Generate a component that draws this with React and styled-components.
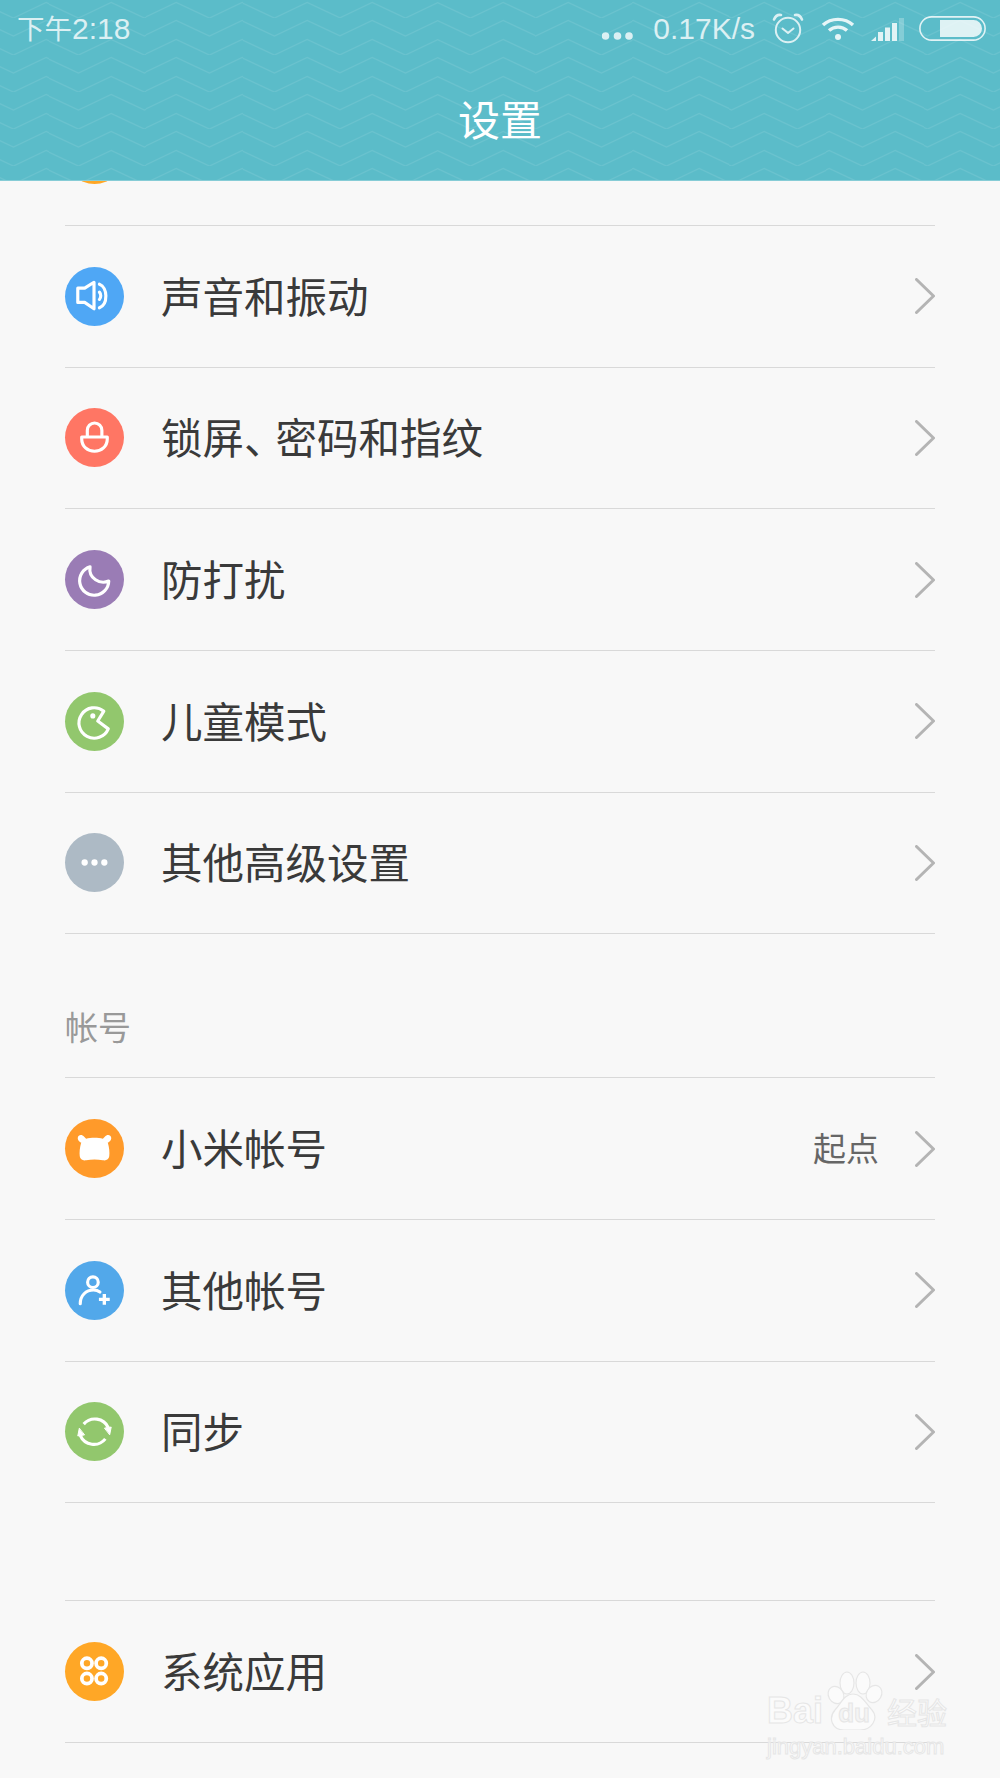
import React from 'react';
import styled, { createGlobalStyle } from 'styled-components';

const zigzag = `url("data:image/svg+xml,%3Csvg xmlns='http://www.w3.org/2000/svg' width='65.33' height='18.5' viewBox='0 0 65.33 18.5'%3E%3Cpath d='M-19.7 2.3L13.3 17.7L45.7 2.3L78.7 17.7' fill='none' stroke='%23ffffff' stroke-opacity='0.09' stroke-width='1.2'/%3E%3C/svg%3E")`;

const GlobalStyle = createGlobalStyle`
  html, body {
    margin: 0;
    padding: 0;
    background: #f8f8f8;
  }
  body {
    font-family: "Noto Sans CJK SC", "Liberation Sans", sans-serif;
  }
`;

const Page = styled.div`
  position: relative;
  width: 1000px;
  height: 1778px;
  overflow: hidden;
  background: #f8f8f8;
`;

const Header = styled.header`
  height: 180px;
  background-color: #5bbcc9;
  background-image: ${zigzag};
  background-size: 65.33px 18.5px;
  border-bottom: 1px solid #86ccd6;
  display: flex;
  flex-direction: column;
`;

const StatusBar = styled.div`
  height: 58px;
  padding: 0 14px 0 17px;
  display: flex;
  align-items: center;
  justify-content: space-between;
  color: rgba(255, 255, 255, 0.78);
  font-family: "Liberation Sans", "Noto Sans CJK SC", sans-serif;
  font-size: 30px;
`;

const Clock = styled.span`
  display: flex;
  align-items: baseline;
`;

const ClockCjk = styled.span`
  font-size: 27.5px;
  font-family: "Noto Sans CJK SC", sans-serif;
  line-height: 1;
`;

const StatusRight = styled.div`
  display: flex;
  align-items: center;
  gap: 16px;
`;

const StatusIcon = styled.svg`
  display: block;
  flex: none;
  margin-left: ${(p) => p.$shift || 0}px;
  margin-bottom: ${(p) => p.$lift || 0}px;
`;

const Title = styled.h1`
  flex: 1;
  margin: 0;
  padding-bottom: 4px;
  display: flex;
  align-items: center;
  justify-content: center;
  color: #fff;
  font-size: 42px;
  font-weight: 400;
`;

const List = styled.main`
  padding: 0 65px;
`;

const PeekRow = styled.div`
  height: 44px;
  overflow: hidden;
  border-bottom: 1px solid #d9d9d9;
  display: flex;
  align-items: flex-end;
`;

const PeekIcon = styled.div`
  width: 59px;
  height: 59px;
  margin-bottom: 41px;
  flex: none;
  border-radius: 50%;
  background: #ffa726;
`;

const Row = styled.div`
  height: 141.67px;
  box-sizing: border-box;
  border-bottom: 1px solid #d9d9d9;
  display: flex;
  align-items: center;
`;

const IconDisc = styled.div`
  width: 59px;
  height: 59px;
  flex: none;
  border-radius: 50%;
  background: ${(p) => p.$color};
  svg {
    display: block;
    width: 100%;
    height: 100%;
  }
`;

const Label = styled.span`
  flex: 1;
  margin-left: 37px;
  padding-bottom: 2px;
  color: #3a3a3a;
  font-size: 41.5px;
  line-height: 1;
`;

const Pause = styled.span`
  letter-spacing: -10px;
`;

const Value = styled.span`
  margin-right: 36px;
  padding-bottom: 3px;
  color: #666;
  font-size: 33px;
`;

const SectionTitle = styled.div`
  height: 144px;
  box-sizing: border-box;
  border-bottom: 1px solid #d9d9d9;
  display: flex;
  align-items: flex-end;
  padding-bottom: 34px;
  color: #999;
  font-size: 33px;
  line-height: 1;
`;

const Spacer = styled.div`
  height: 98px;
  box-sizing: border-box;
  border-bottom: 1px solid #d9d9d9;
`;

const Watermark = styled.div`
  position: absolute;
  left: 767px;
  top: 1668px;
  width: 182px;
  display: flex;
  flex-direction: column;
  color: #fbfbfb;
  -webkit-text-stroke: 1px #e6e6e6;
  font-family: "Liberation Sans", "Noto Sans CJK SC", sans-serif;
  pointer-events: none;
`;

const Paw = styled.svg`
  position: absolute;
  left: 43px;
  top: 0;
`;

const Brand = styled.div`
  position: relative;
  height: 64px;
  display: flex;
  align-items: flex-end;
  font-weight: 700;
  font-size: 36px;
  line-height: 42px;
  white-space: nowrap;
`;

const BrandDu = styled.span`
  position: relative;
  flex: none;
  width: 62px;
  margin-right: 2px;
  text-align: center;
  font-size: 26px;
  line-height: 38px;
  color: #f4f4f4;
`;

const BrandCn = styled.span`
  flex: none;
  font-size: 30px;
  line-height: 42px;
  font-weight: 400;
  font-family: "Noto Sans CJK SC", sans-serif;
`;

const BrandUrl = styled.div`
  font-size: 22px;
  line-height: 26px;
  white-space: nowrap;
  margin-top: 2px;
`;

const Glyph = ({ children, fill = 'none', width = 3.2 }) => (
  <svg
    viewBox="0 0 60 60"
    fill={fill}
    stroke="#fff"
    strokeWidth={width}
    strokeLinecap="round"
    strokeLinejoin="round"
  >
    {children}
  </svg>
);

const SoundIcon = () => (
  <Glyph>
    <path d="M13 21.5V36H20L29.5 42.5V15.5L20 21.5Z" />
    <path d="M35 25.5C36.8 27.5 36.8 31 35 33" />
    <path d="M35 17.5C43.5 20.5 44 38 35 41.5" />
  </Glyph>
);

const LockIcon = () => (
  <Glyph>
    <path d="M17 29.5H43V31.5C43 39 37 44 30 44C23 44 17 39 17 31.5Z" />
    <path d="M22.7 29V22.7A7.4 7.4 0 0 1 37.5 22.7V29" />
  </Glyph>
);

const MoonIcon = () => (
  <Glyph>
    <path d="M25.5 17A14.8 14.8 0 1 0 44.5 31.5C36 35.5 23.5 29 25.5 17Z" />
  </Glyph>
);

const PacmanIcon = () => (
  <Glyph>
    <path d="M39.5 19.5L33.3 29.5L44 37.5A15.5 15.5 0 1 1 39.5 19.5Z" />
    <circle cx="28.3" cy="24.3" r="2.6" fill="#fff" stroke="none" />
  </Glyph>
);

const MoreIcon = () => (
  <Glyph fill="#fff" width={0}>
    <circle cx="20" cy="30" r="3.2" />
    <circle cx="30" cy="30" r="3.2" />
    <circle cx="40" cy="30" r="3.2" />
  </Glyph>
);

const MiIcon = () => (
  <Glyph fill="#fff" width={0}>
    <path d="M13 19C13.5 15.5 17.5 15.5 19.5 18L21.5 20C26 18.8 34 18.8 38.5 20L40.5 18C42.5 15.5 46.5 15.5 47 19C47.3 21.5 45 23.5 43.5 24C45 29 45.5 34 45 38C44.5 41.5 42 42.5 38.5 42C33 41 27 41 21.5 42C18 42.5 15.5 41.5 15 38C14.5 34 15 29 16.5 24C15 23.5 12.7 21.5 13 19Z" />
  </Glyph>
);

const AccountIcon = () => (
  <Glyph>
    <circle cx="28.4" cy="21.5" r="5.4" />
    <path d="M15.5 43.5C15.5 35 21.5 29.5 29 29.5C31.5 29.5 33.5 30 35.5 31.5" />
    <path d="M34.5 39H45.5M40 33.5V44.5" strokeWidth="3.4" strokeLinecap="butt" />
  </Glyph>
);

const SyncIcon = () => (
  <Glyph>
    <path d="M19 22.5A15 15 0 0 1 44 26" strokeLinecap="butt" />
    <path d="M41 37.5A15 15 0 0 1 15.5 34" strokeLinecap="butt" />
    <path d="M40.5 26.5L47 25.5L45.5 33Z" fill="#fff" strokeWidth="1" />
    <path d="M19.5 33.5L13 34.5L14.5 27Z" fill="#fff" strokeWidth="1" />
  </Glyph>
);

const AppsIcon = () => (
  <Glyph width={3.8}>
    <circle cx="22.3" cy="21.7" r="5.2" />
    <circle cx="36.8" cy="21.7" r="5.2" />
    <circle cx="22.3" cy="37.2" r="5.2" />
    <circle cx="36.8" cy="37.2" r="5.2" />
  </Glyph>
);

const Chevron = () => (
  <svg width="20" height="36" viewBox="0 0 20 36" fill="none" stroke="#b4b4b4" strokeWidth="3" strokeLinecap="round" strokeLinejoin="round">
    <path d="M1.5 1.5L18.5 18L1.5 34.5" />
  </svg>
);

const settings = [
  { label: '声音和振动', color: '#4fa7f5', Icon: SoundIcon },
  {
    label: (
      <>
        锁屏<Pause>、</Pause>密码和指纹
      </>
    ),
    color: '#ff7664',
    Icon: LockIcon,
  },
  { label: '防打扰', color: '#9a7cb5', Icon: MoonIcon },
  { label: '儿童模式', color: '#92c76d', Icon: PacmanIcon },
  { label: '其他高级设置', color: '#adbac5', Icon: MoreIcon },
];

const accounts = [
  { label: '小米帐号', color: '#ff9a2a', Icon: MiIcon, value: '起点' },
  { label: '其他帐号', color: '#52a8ea', Icon: AccountIcon },
  { label: '同步', color: '#92c76d', Icon: SyncIcon },
];

function SettingRow({ label, color, Icon, value }) {
  return (
    <Row>
      <IconDisc $color={color}>
        <Icon />
      </IconDisc>
      <Label>{label}</Label>
      {value && <Value>{value}</Value>}
      <Chevron />
    </Row>
  );
}

function StatusIcons() {
  return (
    <StatusRight>
      <StatusIcon width="35" height="24" viewBox="0 0 35 24" fill="rgba(255,255,255,0.78)">
        <circle cx="3.5" cy="19" r="3.8" />
        <circle cx="15.5" cy="19" r="3.8" />
        <circle cx="27" cy="19" r="3.8" />
      </StatusIcon>
      <span>0.17K/s</span>
      <StatusIcon $lift={2} width="34" height="32" viewBox="0 0 34 32" fill="none" stroke="rgba(255,255,255,0.78)" strokeWidth="2">
        <circle cx="17" cy="18" r="12.2" />
        <path d="M11.5 16.5L17 21L22.5 16.5" strokeLinecap="round" strokeLinejoin="round" />
        <path d="M3 7.5C4.5 4 7.5 2.5 10 3M31 7.5C29.5 4 26.5 2.5 24 3" strokeWidth="2.6" strokeLinecap="round" />
      </StatusIcon>
      <StatusIcon width="34" height="26" viewBox="0 0 34 26" fill="none" stroke="rgba(255,255,255,0.85)" strokeWidth="3.4">
        <path d="M2 9C10 1.5 24 1.5 32 9" />
        <path d="M8 14.5C13 10 21 10 26 14.5" />
        <circle cx="17" cy="21" r="3" fill="rgba(255,255,255,0.85)" stroke="none" />
      </StatusIcon>
      <StatusIcon width="34" height="24" viewBox="0 0 34 24" fill="rgba(255,255,255,0.82)">
        <path d="M0 24L5 19.5V24Z" />
        <rect x="7" y="15" width="5" height="9" />
        <rect x="14" y="10.5" width="5" height="13.5" />
        <rect x="21" y="6" width="5" height="18" />
        <rect x="28" y="1" width="5" height="23" fill="rgba(255,255,255,0.25)" />
      </StatusIcon>
      <StatusIcon $shift={-2} $lift={2} width="67" height="25" viewBox="0 0 67 25">
        <rect x="0.9" y="0.9" width="65.2" height="23.2" rx="11.6" fill="none" stroke="rgba(255,255,255,0.82)" strokeWidth="1.6" />
        <path d="M21 4H54.5A8.5 8.5 0 0 1 54.5 21H21Z" fill="rgba(255,255,255,0.8)" />
      </StatusIcon>
    </StatusRight>
  );
}

export default function App() {
  return (
    <Page>
      <GlobalStyle />
      <Header>
        <StatusBar>
          <Clock>
            <ClockCjk>下午</ClockCjk>2:18
          </Clock>
          <StatusIcons />
        </StatusBar>
        <Title>设置</Title>
      </Header>
      <List>
        <PeekRow>
          <PeekIcon />
        </PeekRow>
        {settings.map((item, i) => (
          <SettingRow key={i} {...item} />
        ))}
        <SectionTitle>帐号</SectionTitle>
        {accounts.map((item) => (
          <SettingRow key={item.label} {...item} />
        ))}
        <Spacer />
        <SettingRow label="系统应用" color="#ffa726" Icon={AppsIcon} />
      </List>
      <Watermark>
        <Paw width="80" height="62" viewBox="0 0 80 62" fill="#fbfbfb" stroke="#e6e6e6" strokeWidth="1.2">
          <ellipse cx="37" cy="15" rx="7" ry="11" />
          <ellipse cx="53" cy="15" rx="7" ry="11" />
          <ellipse cx="26" cy="27" rx="7.5" ry="9" transform="rotate(-30 26 27)" />
          <ellipse cx="64" cy="26" rx="7.5" ry="9" transform="rotate(30 64 26)" />
          <path d="M43 26C52 26 56 36 62 42C69 50 62 62 50 62H34C22 62 18 50 25 42C31 36 34 26 43 26Z" />
        </Paw>
        <Brand>
          <span>Bai</span>
          <BrandDu>du</BrandDu>
          <BrandCn>经验</BrandCn>
        </Brand>
        <BrandUrl>jingyan.baidu.com</BrandUrl>
      </Watermark>
    </Page>
  );
}
